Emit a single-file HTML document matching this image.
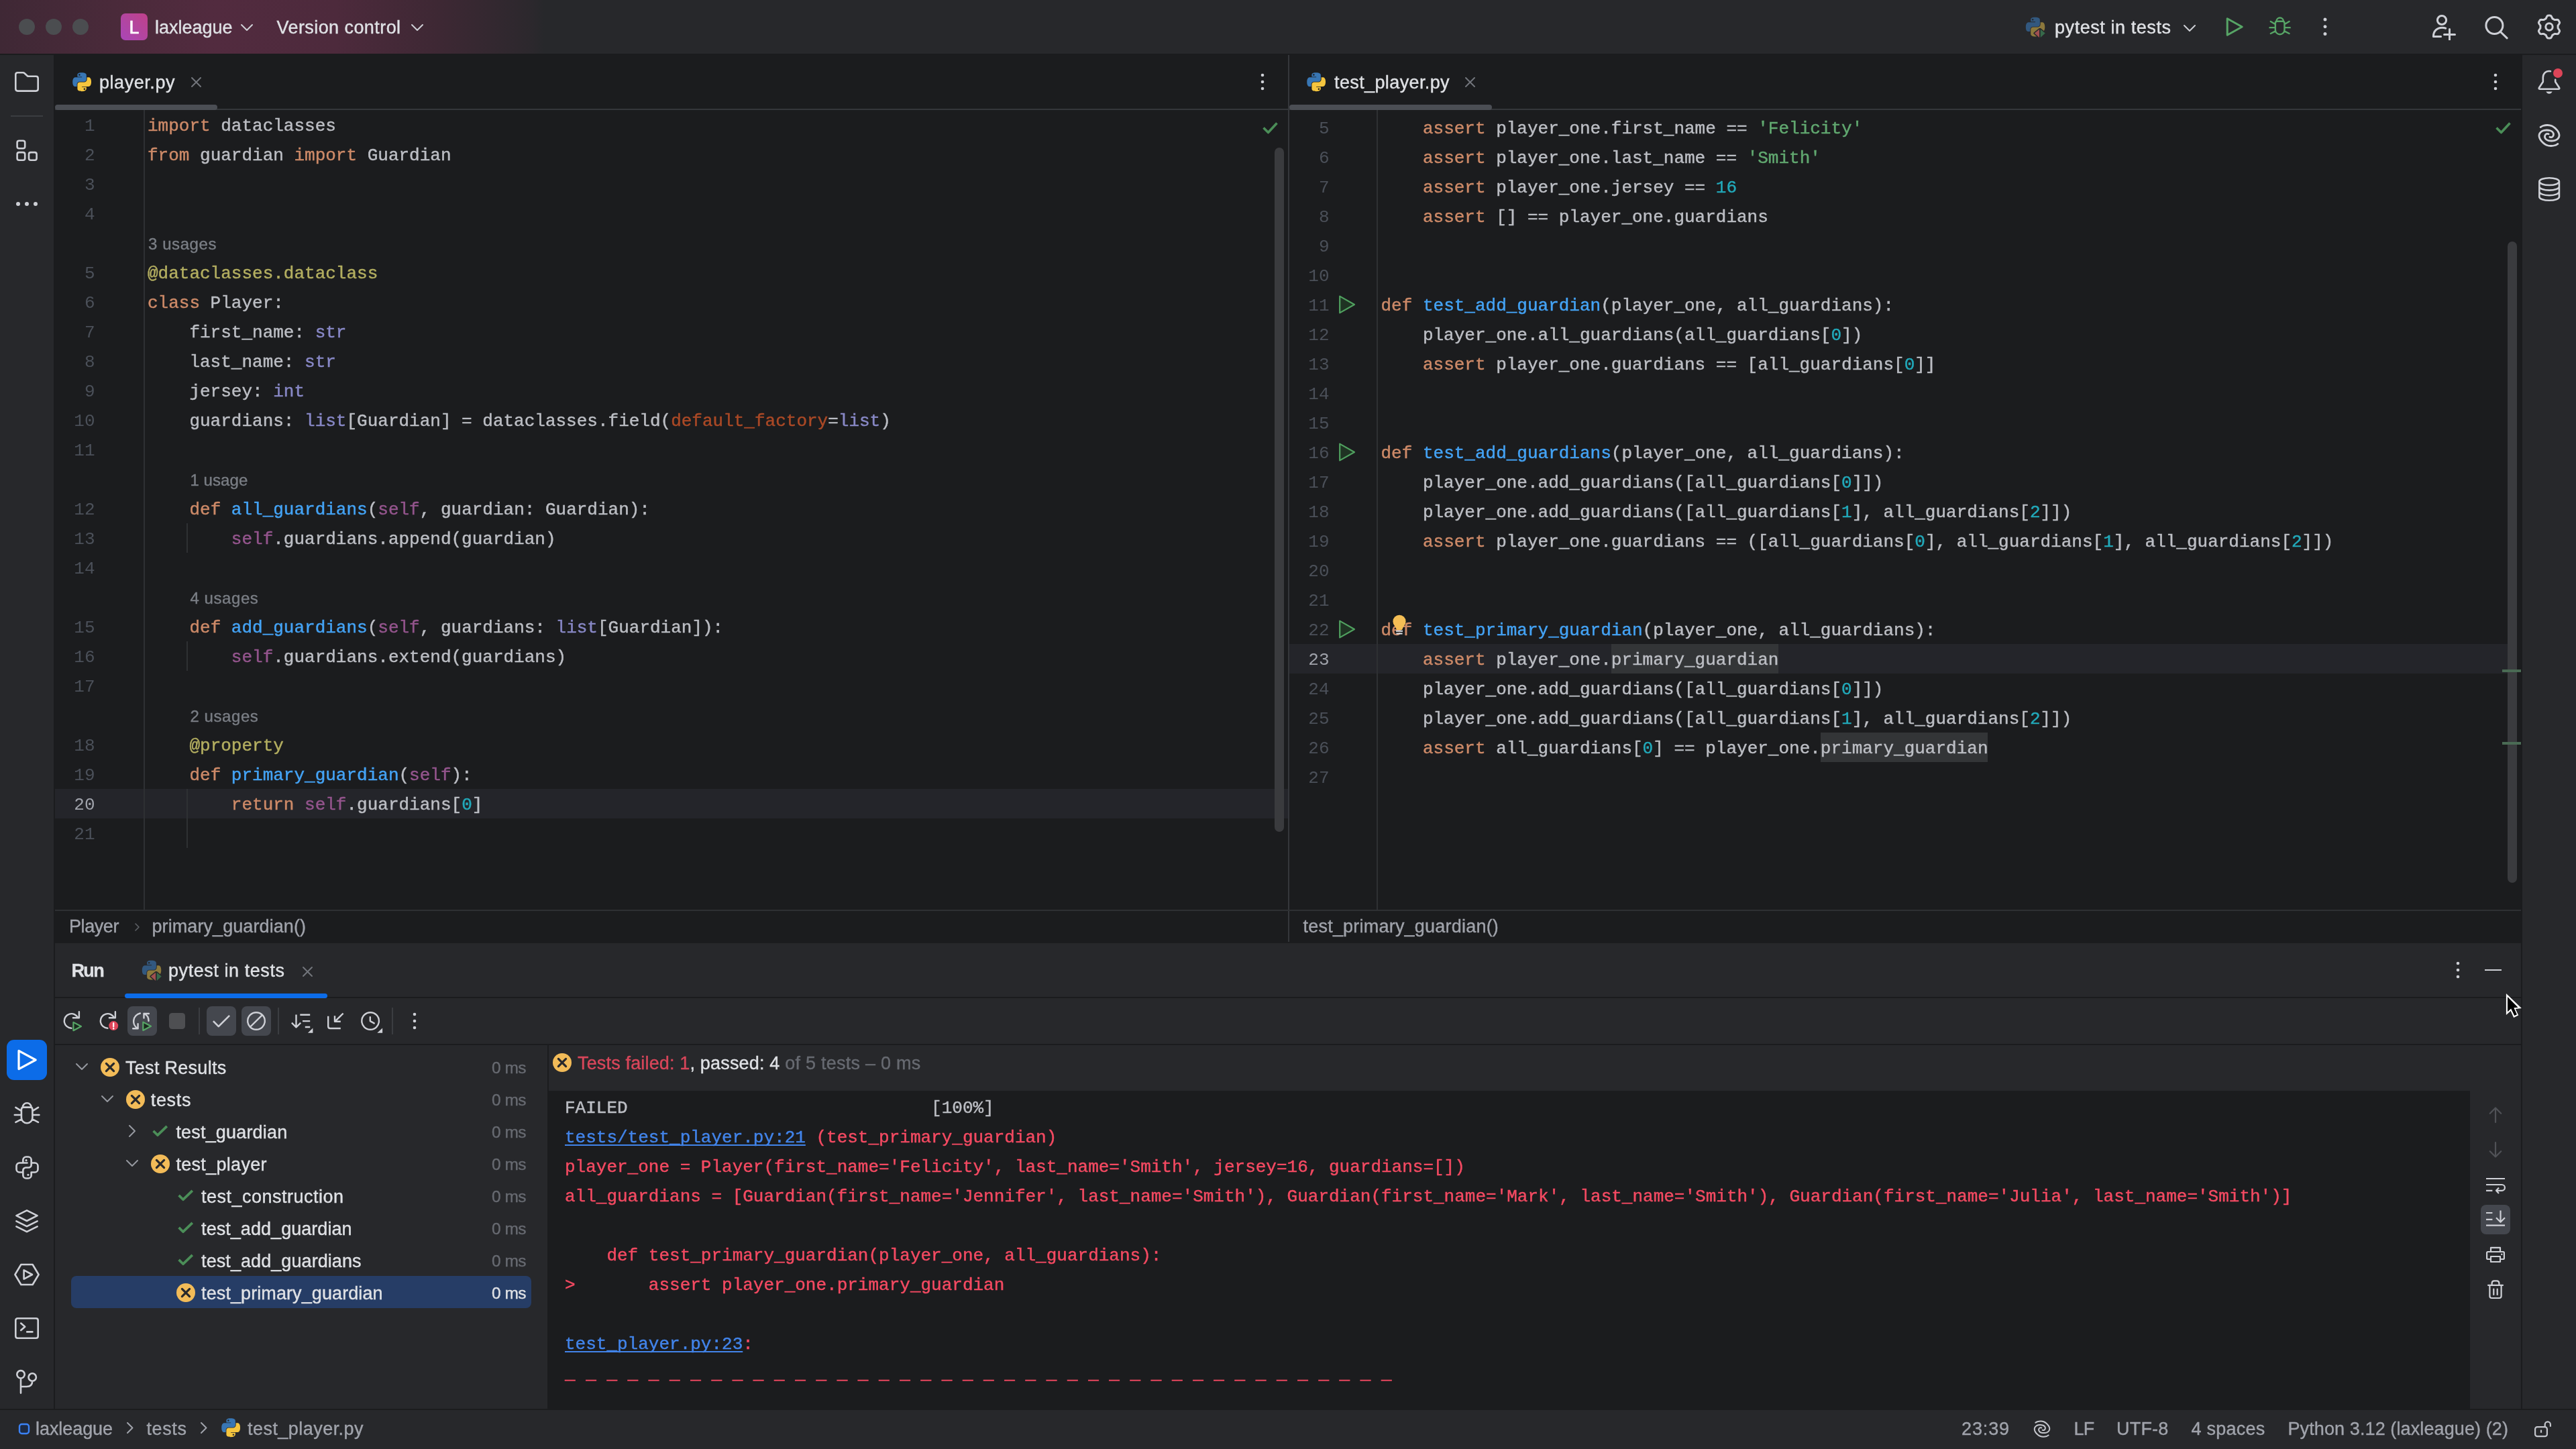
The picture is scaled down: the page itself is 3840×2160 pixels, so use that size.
<!DOCTYPE html>
<html lang="en"><head><meta charset="utf-8"><title>laxleague – test_player.py</title>
<style>
html,body{margin:0;padding:0;background:#1b1c1e;}
body{width:3840px;height:2160px;position:relative;overflow:hidden;font-family:"Liberation Sans",sans-serif;}
.b{position:absolute;display:block;}
.t{position:absolute;white-space:pre;font-family:"Liberation Sans",sans-serif;-webkit-text-stroke:0.38px currentColor;}
.c{position:absolute;white-space:pre;font-family:"Liberation Mono",monospace;font-size:26px;line-height:44px;height:44px;color:#bcbec4;letter-spacing:0;-webkit-text-stroke:0.45px currentColor;}
.ln{position:absolute;white-space:pre;font-family:"Liberation Mono",monospace;font-size:26px;line-height:44px;height:44px;color:#4b5059;text-align:right;}
.k{color:#cd8a68}.s{color:#61a870}.n{color:#22a9ba}.f{color:#44a3f5}.d{color:#b3ae60}.sf{color:#94558d}.bi{color:#8888c6}.kw{color:#aa4926}

.er{color:#f44a62}.lk{color:#4284ea;text-decoration:underline;text-underline-offset:3px;text-decoration-thickness:1.6px;text-decoration-skip-ink:none}
#root{position:absolute;left:0;top:0;width:3840px;height:2160px;will-change:transform;}
</style></head><body><div id="root">
<div class="b" style="left:0px;top:0px;width:3840px;height:80px;background:#27282b;"></div>
<div class="b" style="left:0px;top:0px;width:812px;height:80px;background:linear-gradient(90deg,#3f2835 0px,#4a2a3a 170px,#522b3f 320px,#4d2a3c 500px,#3e2834 650px,#2c282d 790px,#27282b 812px);"></div>
<div class="b" style="left:28px;top:28px;width:24px;height:24px;background:#4b4d50;border-radius:50%;"></div>
<div class="b" style="left:68px;top:28px;width:24px;height:24px;background:#4b4d50;border-radius:50%;"></div>
<div class="b" style="left:108px;top:28px;width:24px;height:24px;background:#4b4d50;border-radius:50%;"></div>
<div class="b" style="left:180px;top:20px;width:40px;height:40px;background:linear-gradient(45deg,#a946b8 0%,#b3459f 50%,#c0408a 100%);border-radius:7px;"></div>
<span class="t" style="top:21.0px;font-size:27px;line-height:40px;color:#ffffff;letter-spacing:0.000px;left:192.6px;-webkit-text-stroke:0.55px #fff;">L</span>
<span class="t" style="top:21.0px;font-size:27px;line-height:40px;color:#dfe1e5;letter-spacing:0.001px;left:231.0px;">laxleague</span>
<svg class="b" style="left:358.0px;top:34.5px;" width="20" height="12.0" viewBox="-2 -2 20 12.0" fill="none"><path d="M0 0L8.0 8.0L16 0" stroke="#ced0d6" stroke-width="2" stroke-linecap="round" stroke-linejoin="round"/></svg>
<span class="t" style="top:21.0px;font-size:27px;line-height:40px;color:#dfe1e5;letter-spacing:0.427px;left:412.5px;">Version control</span>
<svg class="b" style="left:611.5px;top:34.5px;" width="20" height="12.0" viewBox="-2 -2 20 12.0" fill="none"><path d="M0 0L8.0 8.0L16 0" stroke="#ced0d6" stroke-width="2" stroke-linecap="round" stroke-linejoin="round"/></svg>
<svg class="b" style="left:3019px;top:25px;" width="32" height="33" viewBox="0 0 32 33" fill="none"><g transform="translate(0.8 0.8) scale(0.256)"><path fill-rule="evenodd" fill="#32587f" d="M55 0C30 0 28.7 7 28.7 15V25.25H55.5V28.66H18.6C8 28.66 0 36 0 56C0 76 7 83.1 16 83.1H25.4V70.8C25.4 62 33 54.2 42.1 54.2H68.9C76.3 54.2 82.3 48 82.3 40.6V15C82.3 5 72 0 55 0ZM40.4 8.2a5.1 5.1 0 1 1 0 10.2a5.1 5.1 0 1 1 0-10.2Z"/><path fill-rule="evenodd" fill="#8c783c" d="M85.6 28.66V40.6C85.6 49.8 77.8 57.6 68.9 57.6H42.1C34.8 57.6 28.7 63.8 28.7 71.2V96.7C28.7 107 40 112.4 55.5 112.4C72 112.4 82.3 106 82.3 96.7V86.5H55.5V83.1H95.7C105 83.1 111.2 74 111.2 56C111.2 38 105 28.66 95.7 28.66ZM70.6 93.3a5.1 5.1 0 1 1 0 10.2a5.1 5.1 0 1 1 0-10.2Z"/></g><path d="M13.6 24.6L21 18.4H22.7L29.9 24.6L22.7 31.3H21Z" fill="#27282b" stroke="#27282b" stroke-width="2.6" stroke-linejoin="round"/><path d="M13.8 24.6L21 18.8V30.9Z" fill="#a05050"/><path d="M29.7 24.6L22.7 18.8V30.9Z" fill="#37694a"/></svg>
<span class="t" style="top:21.0px;font-size:27px;line-height:40px;color:#dfe1e5;letter-spacing:0.562px;left:3063.0px;">pytest in tests</span>
<svg class="b" style="left:3254.0px;top:36.0px;" width="20" height="12.0" viewBox="-2 -2 20 12.0" fill="none"><path d="M0 0L8.0 8.0L16 0" stroke="#ced0d6" stroke-width="2" stroke-linecap="round" stroke-linejoin="round"/></svg>
<svg class="b" style="left:3311.0px;top:20.0px;" width="40" height="40" viewBox="0 0 20 20" fill="none"><path d="M4.6 3.9V16.1L15.6 10Z" stroke="#57a566" stroke-width="1.5" stroke-linecap="round" stroke-linejoin="round" /></svg>
<svg class="b" style="left:3381.5px;top:23.200000000000003px;" width="33" height="33" viewBox="0 0 20 20" fill="none"><path d="M6.9 5.3A3.2 3.2 0 0 1 13.3 5.3M5.95 7Q5.95 5.3 7.5 5.3H12.7Q14.2 5.3 14.2 7V13A4.12 4.12 0 0 1 5.95 13ZM5.8 7.9L1.7 5.4M5.8 11H0.9M5.8 14.3L1.7 16.4M14.4 7.9L18.5 5.4M14.4 11H19.2M14.4 14.3L18.5 16.4" stroke="#57a566" stroke-width="1.45" stroke-linecap="round" stroke-linejoin="round" /></svg>
<svg class="b" style="left:3462px;top:25.2px;" width="8" height="29.6" viewBox="-4 -14.8 8 29.6" fill="none"><circle cx="0" cy="-10.8" r="2.5" fill="#ced0d6"/><circle cx="0" cy="0" r="2.5" fill="#ced0d6"/><circle cx="0" cy="10.8" r="2.5" fill="#ced0d6"/></svg>
<svg class="b" style="left:3622.0px;top:20.0px;" width="40" height="40" viewBox="0 0 20 20" fill="none"><path d="M9 1.7a3.3 3.3 0 1 1 0 6.6a3.3 3.3 0 1 1 0-6.6ZM8.3 17.2H2.7C2.7 13 5.6 10.6 9.2 10.6C10.4 10.6 11.2 10.8 11.8 11.1M14.75 11.75V19.75M10.75 15.75H18.75" stroke="#ced0d6" stroke-width="1.5" stroke-linecap="round" stroke-linejoin="round" /></svg>
<svg class="b" style="left:3700.5px;top:20.0px;" width="40" height="40" viewBox="0 0 20 20" fill="none"><path d="M8.7 2.75a6.25 6.25 0 1 1 0 12.5a6.25 6.25 0 1 1 0-12.5ZM13.25 13.75L18.1 18.4" stroke="#ced0d6" stroke-width="1.5" stroke-linecap="round" stroke-linejoin="round" /></svg>
<svg class="b" style="left:3780.0px;top:20.0px;" width="40" height="40" viewBox="0 0 20 20" fill="none"><path d="M16.55 10.00L16.54 10.29L16.53 10.57L16.49 10.85L16.68 11.18L16.96 11.54L17.24 11.94L17.50 12.37L17.72 12.81L17.81 13.23L17.66 13.57L17.50 13.90L17.32 14.22L17.13 14.54L16.92 14.85L16.70 15.14L16.29 15.28L15.80 15.32L15.30 15.30L14.82 15.26L14.36 15.20L13.99 15.20L13.76 15.37L13.52 15.52L13.28 15.67L13.02 15.81L12.77 15.94L12.51 16.05L12.32 16.38L12.14 16.80L11.94 17.24L11.70 17.68L11.43 18.09L11.10 18.38L10.74 18.42L10.37 18.44L10.00 18.45L9.63 18.44L9.26 18.42L8.90 18.38L8.57 18.09L8.30 17.68L8.06 17.24L7.86 16.80L7.68 16.38L7.49 16.05L7.23 15.94L6.98 15.81L6.73 15.67L6.48 15.52L6.24 15.37L6.01 15.20L5.64 15.20L5.18 15.26L4.70 15.30L4.20 15.32L3.71 15.28L3.30 15.14L3.08 14.85L2.87 14.54L2.68 14.23L2.50 13.90L2.34 13.57L2.19 13.23L2.28 12.81L2.50 12.37L2.76 11.94L3.04 11.54L3.32 11.18L3.51 10.85L3.47 10.57L3.46 10.29L3.45 10.00L3.46 9.71L3.47 9.43L3.51 9.15L3.32 8.82L3.04 8.46L2.76 8.06L2.50 7.63L2.28 7.19L2.19 6.77L2.34 6.43L2.50 6.10L2.68 5.77L2.87 5.46L3.08 5.15L3.30 4.86L3.71 4.72L4.20 4.68L4.70 4.70L5.18 4.74L5.64 4.80L6.01 4.80L6.24 4.63L6.48 4.48L6.72 4.33L6.98 4.19L7.23 4.06L7.49 3.95L7.68 3.62L7.86 3.20L8.06 2.76L8.30 2.32L8.57 1.91L8.90 1.62L9.26 1.58L9.63 1.56L10.00 1.55L10.37 1.56L10.74 1.58L11.10 1.62L11.43 1.91L11.70 2.32L11.94 2.76L12.14 3.20L12.32 3.62L12.51 3.95L12.77 4.06L13.02 4.19L13.27 4.33L13.52 4.48L13.76 4.63L13.99 4.80L14.36 4.80L14.82 4.74L15.30 4.70L15.80 4.68L16.29 4.72L16.70 4.86L16.92 5.15L17.13 5.46L17.32 5.78L17.50 6.10L17.66 6.43L17.81 6.77L17.72 7.19L17.50 7.63L17.24 8.06L16.96 8.46L16.68 8.82L16.49 9.15L16.53 9.43L16.54 9.71Z" stroke="#ced0d6" stroke-width="1.5" stroke-linejoin="round"/><circle cx="10" cy="10" r="2.6" stroke="#ced0d6" stroke-width="1.5"/></svg>
<div class="b" style="left:0px;top:82px;width:80px;height:2018px;background:#27282b;"></div>
<div class="b" style="left:3760px;top:82px;width:80px;height:2018px;background:#27282b;"></div>
<div class="b" style="left:0px;top:2102px;width:3840px;height:58px;background:#27282b;"></div>
<svg class="b" style="left:20.0px;top:102.0px;" width="40" height="40" viewBox="0 0 20 20" fill="none"><path d="M3.15 3.1H7.1Q7.7 3.1 8.15 3.5L10.3 5.5Q10.7 5.9 11.3 5.9H16.85Q18.35 5.9 18.35 7.4V15.3Q18.35 16.8 16.85 16.8H3.15Q1.65 16.8 1.65 15.3V4.6Q1.65 3.1 3.15 3.1Z" stroke="#ced0d6" stroke-width="1.3" stroke-linecap="round" stroke-linejoin="round" /></svg>
<div class="b" style="left:16px;top:172px;width:48px;height:2px;background:#3b3d41;"></div>
<svg class="b" style="left:20.0px;top:204.0px;" width="40" height="40" viewBox="0 0 20 20" fill="none"><rect x="2.8" y="2.85" width="5.8" height="5.8" rx="1.4" stroke="#ced0d6" stroke-width="1.3"/><rect x="2.8" y="11.55" width="5.8" height="5.8" rx="1.4" stroke="#ced0d6" stroke-width="1.3"/><rect x="11.5" y="11.55" width="5.8" height="5.8" rx="1.4" stroke="#ced0d6" stroke-width="1.3"/></svg>
<div class="b" style="left:23.799999999999997px;top:301.09999999999997px;width:6.2px;height:6.2px;background:#ced0d6;border-radius:50%;"></div>
<div class="b" style="left:36.9px;top:301.09999999999997px;width:6.2px;height:6.2px;background:#ced0d6;border-radius:50%;"></div>
<div class="b" style="left:50.0px;top:301.09999999999997px;width:6.2px;height:6.2px;background:#ced0d6;border-radius:50%;"></div>
<div class="b" style="left:10px;top:1550px;width:60px;height:60px;background:#0c6ce8;border-radius:11px;"></div>
<svg class="b" style="left:20.0px;top:1560.0px;" width="40" height="40" viewBox="0 0 20 20" fill="none"><path d="M4 3.2V16.8L16.6 10Z" stroke="#ffffff" stroke-width="1.6" stroke-linecap="round" stroke-linejoin="round" /></svg>
<svg class="b" style="left:20.0px;top:1639.7px;" width="40" height="40" viewBox="0 0 20 20" fill="none"><path d="M6.9 5.3A3.2 3.2 0 0 1 13.3 5.3M5.95 7Q5.95 5.3 7.5 5.3H12.7Q14.2 5.3 14.2 7V13A4.12 4.12 0 0 1 5.95 13ZM5.8 7.9L1.7 5.4M5.8 11H0.9M5.8 14.3L1.7 16.4M14.4 7.9L18.5 5.4M14.4 11H19.2M14.4 14.3L18.5 16.4" stroke="#ced0d6" stroke-width="1.3" stroke-linecap="round" stroke-linejoin="round" /></svg>
<svg class="b" style="left:19.5px;top:1719.5px;" width="41" height="41" viewBox="0 0 20 20" fill="none"><path d="M7 6.6V4.4C7 3.2 8 2.2 9.2 2.2H10.8C12 2.2 13 3.2 13 4.4V8C13 9.1 12.1 10 11 10H9C7.9 10 7 10.9 7 12V15.6C7 16.8 8 17.8 9.2 17.8H10.8C12 17.8 13 16.8 13 15.6V13.4M7 6.6H4.4C3.2 6.6 2.2 7.6 2.2 8.8V11.2C2.2 12.4 3.2 13.4 4.4 13.4H7M13 13.4H15.6C16.8 13.4 17.8 12.4 17.8 11.2V8.8C17.8 7.6 16.8 6.6 15.6 6.6H13M7 6.6H10" stroke="#ced0d6" stroke-width="1.3" stroke-linecap="round" stroke-linejoin="round" /><circle cx="9.3" cy="4.7" r="0.75" fill="#ced0d6"/><circle cx="10.7" cy="15.3" r="0.75" fill="#ced0d6"/></svg>
<svg class="b" style="left:20.0px;top:1800.0px;" width="40" height="40" viewBox="0 0 20 20" fill="none"><path d="M10 2.2L17.8 6.1L10 10L2.2 6.1ZM2.2 10.2L10 14.1L17.8 10.2M2.2 14.2L10 18.1L17.8 14.2" stroke="#ced0d6" stroke-width="1.3" stroke-linecap="round" stroke-linejoin="round" /></svg>
<svg class="b" style="left:20.0px;top:1880.0px;" width="40" height="40" viewBox="0 0 20 20" fill="none"><path d="M5.7 2.5H14.3L18.8 10L14.3 17.5H5.7L1.2 10ZM7.8 6.7V13.3L14 10Z" stroke="#ced0d6" stroke-width="1.3" stroke-linecap="round" stroke-linejoin="round" /></svg>
<svg class="b" style="left:20.0px;top:1960.0px;" width="40" height="40" viewBox="0 0 20 20" fill="none"><path d="M3.15 2.65H16.85Q18.35 2.65 18.35 4.15V15.9Q18.35 17.4 16.85 17.4H3.15Q1.65 17.4 1.65 15.9V4.15Q1.65 2.65 3.15 2.65ZM5.6 6.3L8.6 8.9L5.6 11.5M10.1 12.7H14.2" stroke="#ced0d6" stroke-width="1.3" stroke-linecap="round" stroke-linejoin="round" /></svg>
<svg class="b" style="left:20.0px;top:2040.0px;" width="40" height="40" viewBox="0 0 20 20" fill="none"><path d="M5.5 1.55a2.85 2.85 0 1 1 0 5.7a2.85 2.85 0 1 1 0-5.7ZM14.1 3.65a2.85 2.85 0 1 1 0 5.7a2.85 2.85 0 1 1 0-5.7ZM5.5 7.3V18.3M14.1 9.4C14.1 12.4 12.4 13.5 9.8 13.5H5.5" stroke="#ced0d6" stroke-width="1.3" stroke-linecap="round" stroke-linejoin="round" /></svg>
<svg class="b" style="left:3780.0px;top:102.0px;" width="40" height="40" viewBox="0 0 20 20" fill="none"><path d="M11 2.1C10.7 2 10.3 2 10 2C7.3 2 5.4 4 5.4 6.8V10L2.5 14.4Q2.1 15.4 3.1 15.4H16.9Q17.9 15.4 17.5 14.4L14.6 10V8.4" stroke="#ced0d6" stroke-width="1.3" stroke-linecap="round" stroke-linejoin="round" /><path d="M7.7 17.3H12.3Q11.5 18.9 10 18.9Q8.5 18.9 7.7 17.3Z" fill="#ced0d6"/></svg>
<div class="b" style="left:3806px;top:101.7px;width:14px;height:14px;background:#dd4558;border-radius:50%;"></div>
<svg class="b" style="left:3780px;top:182px;" width="40" height="40" viewBox="0 0 40 40" fill="none"><path d="M32.84 32.52C32.23 32.85 30.91 34.00 29.20 34.50C27.49 35.00 24.79 35.55 22.58 35.50C20.37 35.45 17.89 34.95 15.96 34.18C14.03 33.41 12.53 32.22 11.00 30.86C9.47 29.50 7.79 27.61 6.80 26.00C5.81 24.39 5.21 22.70 5.04 21.20C4.87 19.70 5.17 18.23 5.80 17.00C6.43 15.77 7.66 14.58 8.80 13.80C9.94 13.02 11.34 12.62 12.64 12.32C13.94 12.02 15.24 11.97 16.62 12.00C18.00 12.03 19.65 12.15 20.92 12.48C22.19 12.81 23.36 13.31 24.24 14.00C25.12 14.69 25.86 15.74 26.22 16.62C26.58 17.50 26.57 18.45 26.40 19.28C26.23 20.11 25.73 21.05 25.20 21.60C24.67 22.15 23.91 22.49 23.20 22.60C22.49 22.71 21.30 22.32 20.92 22.26M7.16 7.48C7.77 7.15 9.09 6.00 10.80 5.50C12.51 5.00 15.21 4.45 17.42 4.50C19.63 4.55 22.11 5.05 24.04 5.82C25.97 6.59 27.47 7.78 29.00 9.14C30.53 10.50 32.21 12.39 33.20 14.00C34.19 15.61 34.79 17.30 34.96 18.80C35.13 20.30 34.83 21.77 34.20 23.00C33.57 24.23 32.34 25.42 31.20 26.20C30.06 26.98 28.66 27.38 27.36 27.68C26.06 27.98 24.76 28.03 23.38 28.00C22.00 27.97 20.35 27.85 19.08 27.52C17.81 27.19 16.64 26.69 15.76 26.00C14.88 25.31 14.14 24.26 13.78 23.38C13.42 22.50 13.43 21.55 13.60 20.72C13.77 19.89 14.27 18.95 14.80 18.40C15.33 17.85 16.09 17.51 16.80 17.40C17.51 17.29 18.70 17.68 19.08 17.74" stroke="#ced0d6" stroke-width="2.8" stroke-linecap="round" stroke-linejoin="round" /></svg>
<svg class="b" style="left:3780.0px;top:262.0px;" width="40" height="40" viewBox="0 0 20 20" fill="none"><path d="M2.67 4.3A7.4 2.7 0 0 1 17.47 4.3A7.4 2.7 0 0 1 2.67 4.3V15.7A7.4 2.7 0 0 0 17.47 15.7V4.3M2.67 8.1A7.4 2.7 0 0 0 17.47 8.1M2.67 11.9A7.4 2.7 0 0 0 17.47 11.9" stroke="#ced0d6" stroke-width="1.3" stroke-linecap="round" stroke-linejoin="round" /></svg>
<div class="b" style="left:82px;top:162px;width:1838px;height:2px;background:#35373b;"></div>
<div class="b" style="left:1922px;top:162px;width:1836px;height:2px;background:#35373b;"></div>
<div class="b" style="left:1920px;top:82px;width:2px;height:1322px;background:#35373b;"></div>
<svg class="b" style="left:107.5px;top:108px;" width="28.5" height="28.5" viewBox="-1 0 114 113" fill="none"><path fill-rule="evenodd" fill="#3876b4" d="M55 0C30 0 28.7 7 28.7 15V25.25H55.5V28.66H18.6C8 28.66 0 36 0 56C0 76 7 83.1 16 83.1H25.4V70.8C25.4 62 33 54.2 42.1 54.2H68.9C76.3 54.2 82.3 48 82.3 40.6V15C82.3 5 72 0 55 0ZM40.4 8.2a5.1 5.1 0 1 1 0 10.2a5.1 5.1 0 1 1 0-10.2Z"/><path fill-rule="evenodd" fill="#f5c53e" d="M85.6 28.66V40.6C85.6 49.8 77.8 57.6 68.9 57.6H42.1C34.8 57.6 28.7 63.8 28.7 71.2V96.7C28.7 107 40 112.4 55.5 112.4C72 112.4 82.3 106 82.3 96.7V86.5H55.5V83.1H95.7C105 83.1 111.2 74 111.2 56C111.2 38 105 28.66 95.7 28.66ZM70.6 93.3a5.1 5.1 0 1 1 0 10.2a5.1 5.1 0 1 1 0-10.2Z"/></svg>
<span class="t" style="top:103.0px;font-size:27px;line-height:40px;color:#dfe1e5;letter-spacing:0.549px;left:148.0px;">player.py</span>
<svg class="b" style="left:283.5px;top:113.5px;" width="17" height="17" viewBox="-2 -2 17 17" fill="none"><path d="M0 0L13 13M13 0L0 13" stroke="#72757b" stroke-width="2" stroke-linecap="round"/></svg>
<div class="b" style="left:82px;top:156px;width:242px;height:8px;background:#4b4e54;border-radius:4px;"></div>
<svg class="b" style="left:1878px;top:108px;" width="8" height="28" viewBox="-4 -14 8 28" fill="none"><circle cx="0" cy="-10" r="2.3" fill="#ced0d6"/><circle cx="0" cy="0" r="2.3" fill="#ced0d6"/><circle cx="0" cy="10" r="2.3" fill="#ced0d6"/></svg>
<svg class="b" style="left:1947.5px;top:108px;" width="28.5" height="28.5" viewBox="-1 0 114 113" fill="none"><path fill-rule="evenodd" fill="#3876b4" d="M55 0C30 0 28.7 7 28.7 15V25.25H55.5V28.66H18.6C8 28.66 0 36 0 56C0 76 7 83.1 16 83.1H25.4V70.8C25.4 62 33 54.2 42.1 54.2H68.9C76.3 54.2 82.3 48 82.3 40.6V15C82.3 5 72 0 55 0ZM40.4 8.2a5.1 5.1 0 1 1 0 10.2a5.1 5.1 0 1 1 0-10.2Z"/><path fill-rule="evenodd" fill="#f5c53e" d="M85.6 28.66V40.6C85.6 49.8 77.8 57.6 68.9 57.6H42.1C34.8 57.6 28.7 63.8 28.7 71.2V96.7C28.7 107 40 112.4 55.5 112.4C72 112.4 82.3 106 82.3 96.7V86.5H55.5V83.1H95.7C105 83.1 111.2 74 111.2 56C111.2 38 105 28.66 95.7 28.66ZM70.6 93.3a5.1 5.1 0 1 1 0 10.2a5.1 5.1 0 1 1 0-10.2Z"/></svg>
<span class="t" style="top:103.0px;font-size:27px;line-height:40px;color:#dfe1e5;letter-spacing:0.386px;left:1989.0px;">test_player.py</span>
<svg class="b" style="left:2183.0px;top:113.5px;" width="17" height="17" viewBox="-2 -2 17 17" fill="none"><path d="M0 0L13 13M13 0L0 13" stroke="#72757b" stroke-width="2" stroke-linecap="round"/></svg>
<div class="b" style="left:1922px;top:156px;width:302px;height:8px;background:#4b4e54;border-radius:4px;"></div>
<svg class="b" style="left:3716px;top:108px;" width="8" height="28" viewBox="-4 -14 8 28" fill="none"><circle cx="0" cy="-10" r="2.3" fill="#ced0d6"/><circle cx="0" cy="0" r="2.3" fill="#ced0d6"/><circle cx="0" cy="10" r="2.3" fill="#ced0d6"/></svg>
<div class="b" style="left:214px;top:164px;width:2px;height:1192px;background:#2e3033;"></div>
<div class="b" style="left:2052px;top:164px;width:2px;height:1192px;background:#2e3033;"></div>
<div class="b" style="left:82px;top:1356px;width:3676px;height:2px;background:#2e3033;"></div>
<span class="t" style="top:1360.5px;font-size:27px;line-height:40px;color:#a0a3ab;letter-spacing:-0.422px;left:103.0px;">Player</span>
<svg class="b" style="left:199.5px;top:1374.5px;" width="9.0" height="14" viewBox="-2 -2 9.0 14" fill="none"><path d="M0 0L5.0 5.0L0 10" stroke="#5e6167" stroke-width="1.6" stroke-linecap="round" stroke-linejoin="round"/></svg>
<span class="t" style="top:1360.5px;font-size:27px;line-height:40px;color:#a0a3ab;letter-spacing:0.081px;left:226.5px;">primary_guardian()</span>
<span class="t" style="top:1360.5px;font-size:27px;line-height:40px;color:#a0a3ab;letter-spacing:0.214px;left:1942.5px;">test_primary_guardian()</span>
<div class="b" style="left:82px;top:1176px;width:1838px;height:44px;background:#24252a;"></div>
<div class="b" style="left:214px;top:1176px;width:2px;height:44px;background:#2e3033;"></div>
<div class="b" style="left:278px;top:780px;width:2px;height:44px;background:#2e3033;"></div>
<div class="b" style="left:278px;top:956px;width:2px;height:44px;background:#2e3033;"></div>
<div class="b" style="left:278px;top:1176px;width:2px;height:88px;background:#2e3033;"></div>
<div class="ln" style="left:61.5px;width:80px;top:166px;">1</div>
<div class="c" style="left:220px;top:166px;"><span class="k">import</span> dataclasses</div>
<div class="ln" style="left:61.5px;width:80px;top:210px;">2</div>
<div class="c" style="left:220px;top:210px;"><span class="k">from</span> guardian <span class="k">import</span> Guardian</div>
<div class="ln" style="left:61.5px;width:80px;top:254px;">3</div>
<div class="ln" style="left:61.5px;width:80px;top:298px;">4</div>
<span class="t" style="top:343.5px;font-size:24px;line-height:40px;color:#7a7e85;letter-spacing:0.576px;left:221.0px;">3 usages</span>
<div class="ln" style="left:61.5px;width:80px;top:386px;">5</div>
<div class="c" style="left:220px;top:386px;"><span class="d">@dataclasses.dataclass</span></div>
<div class="ln" style="left:61.5px;width:80px;top:430px;">6</div>
<div class="c" style="left:220px;top:430px;"><span class="k">class</span> Player:</div>
<div class="ln" style="left:61.5px;width:80px;top:474px;">7</div>
<div class="c" style="left:220px;top:474px;">    first_name: <span class="bi">str</span></div>
<div class="ln" style="left:61.5px;width:80px;top:518px;">8</div>
<div class="c" style="left:220px;top:518px;">    last_name: <span class="bi">str</span></div>
<div class="ln" style="left:61.5px;width:80px;top:562px;">9</div>
<div class="c" style="left:220px;top:562px;">    jersey: <span class="bi">int</span></div>
<div class="ln" style="left:61.5px;width:80px;top:606px;">10</div>
<div class="c" style="left:220px;top:606px;">    guardians: <span class="bi">list</span>[Guardian] = dataclasses.field(<span class="kw">default_factory</span>=<span class="bi">list</span>)</div>
<div class="ln" style="left:61.5px;width:80px;top:650px;">11</div>
<span class="t" style="top:695.5px;font-size:24px;line-height:40px;color:#7a7e85;letter-spacing:0.087px;left:283.4px;">1 usage</span>
<div class="ln" style="left:61.5px;width:80px;top:738px;">12</div>
<div class="c" style="left:220px;top:738px;">    <span class="k">def</span> <span class="f">all_guardians</span>(<span class="sf">self</span>, guardian: Guardian):</div>
<div class="ln" style="left:61.5px;width:80px;top:782px;">13</div>
<div class="c" style="left:220px;top:782px;">        <span class="sf">self</span>.guardians.append(guardian)</div>
<div class="ln" style="left:61.5px;width:80px;top:826px;">14</div>
<span class="t" style="top:871.5px;font-size:24px;line-height:40px;color:#7a7e85;letter-spacing:0.576px;left:283.4px;">4 usages</span>
<div class="ln" style="left:61.5px;width:80px;top:914px;">15</div>
<div class="c" style="left:220px;top:914px;">    <span class="k">def</span> <span class="f">add_guardians</span>(<span class="sf">self</span>, guardians: <span class="bi">list</span>[Guardian]):</div>
<div class="ln" style="left:61.5px;width:80px;top:958px;">16</div>
<div class="c" style="left:220px;top:958px;">        <span class="sf">self</span>.guardians.extend(guardians)</div>
<div class="ln" style="left:61.5px;width:80px;top:1002px;">17</div>
<span class="t" style="top:1047.5px;font-size:24px;line-height:40px;color:#7a7e85;letter-spacing:0.576px;left:283.4px;">2 usages</span>
<div class="ln" style="left:61.5px;width:80px;top:1090px;">18</div>
<div class="c" style="left:220px;top:1090px;">    <span class="d">@property</span></div>
<div class="ln" style="left:61.5px;width:80px;top:1134px;">19</div>
<div class="c" style="left:220px;top:1134px;">    <span class="k">def</span> <span class="f">primary_guardian</span>(<span class="sf">self</span>):</div>
<div class="ln" style="left:61.5px;width:80px;top:1178px;color:#a0a3ab;">20</div>
<div class="c" style="left:220px;top:1178px;">        <span class="k">return</span> <span class="sf">self</span>.guardians[<span class="n">0</span>]</div>
<div class="ln" style="left:61.5px;width:80px;top:1222px;">21</div>
<div class="b" style="left:1900px;top:220px;width:14px;height:1020px;background:#3a3b3e;border-radius:7px;"></div>
<svg class="b" style="left:1880px;top:178px;" width="28" height="24" viewBox="0 0 28 24" fill="none"><path d="M3.5 12.5L10.5 19.5L23.5 5.5" stroke="#4b8e58" stroke-width="3.6" stroke-linecap="butt" stroke-linejoin="round" /></svg>
<div class="b" style="left:1922px;top:960px;width:1816px;height:44px;background:#24252a;"></div>
<div class="b" style="left:2052px;top:960px;width:2px;height:44px;background:#2e3033;"></div>
<div class="b" style="left:2401.7px;top:960px;width:249.6px;height:44px;background:#333537;"></div>
<div class="b" style="left:2713.7px;top:1092px;width:249.6px;height:44px;background:#333537;"></div>
<div class="ln" style="left:1901.5px;width:80px;top:170px;">5</div>
<div class="c" style="left:2058.5px;top:170px;">    <span class="k">assert</span> player_one.first_name == <span class="s">'Felicity'</span></div>
<div class="ln" style="left:1901.5px;width:80px;top:214px;">6</div>
<div class="c" style="left:2058.5px;top:214px;">    <span class="k">assert</span> player_one.last_name == <span class="s">'Smith'</span></div>
<div class="ln" style="left:1901.5px;width:80px;top:258px;">7</div>
<div class="c" style="left:2058.5px;top:258px;">    <span class="k">assert</span> player_one.jersey == <span class="n">16</span></div>
<div class="ln" style="left:1901.5px;width:80px;top:302px;">8</div>
<div class="c" style="left:2058.5px;top:302px;">    <span class="k">assert</span> [] == player_one.guardians</div>
<div class="ln" style="left:1901.5px;width:80px;top:346px;">9</div>
<div class="ln" style="left:1901.5px;width:80px;top:390px;">10</div>
<div class="ln" style="left:1901.5px;width:80px;top:434px;">11</div>
<div class="c" style="left:2058.5px;top:434px;"><span class="k">def</span> <span class="f">test_add_guardian</span>(player_one, all_guardians):</div>
<div class="ln" style="left:1901.5px;width:80px;top:478px;">12</div>
<div class="c" style="left:2058.5px;top:478px;">    player_one.all_guardians(all_guardians[<span class="n">0</span>])</div>
<div class="ln" style="left:1901.5px;width:80px;top:522px;">13</div>
<div class="c" style="left:2058.5px;top:522px;">    <span class="k">assert</span> player_one.guardians == [all_guardians[<span class="n">0</span>]]</div>
<div class="ln" style="left:1901.5px;width:80px;top:566px;">14</div>
<div class="ln" style="left:1901.5px;width:80px;top:610px;">15</div>
<div class="ln" style="left:1901.5px;width:80px;top:654px;">16</div>
<div class="c" style="left:2058.5px;top:654px;"><span class="k">def</span> <span class="f">test_add_guardians</span>(player_one, all_guardians):</div>
<div class="ln" style="left:1901.5px;width:80px;top:698px;">17</div>
<div class="c" style="left:2058.5px;top:698px;">    player_one.add_guardians([all_guardians[<span class="n">0</span>]])</div>
<div class="ln" style="left:1901.5px;width:80px;top:742px;">18</div>
<div class="c" style="left:2058.5px;top:742px;">    player_one.add_guardians([all_guardians[<span class="n">1</span>], all_guardians[<span class="n">2</span>]])</div>
<div class="ln" style="left:1901.5px;width:80px;top:786px;">19</div>
<div class="c" style="left:2058.5px;top:786px;">    <span class="k">assert</span> player_one.guardians == ([all_guardians[<span class="n">0</span>], all_guardians[<span class="n">1</span>], all_guardians[<span class="n">2</span>]])</div>
<div class="ln" style="left:1901.5px;width:80px;top:830px;">20</div>
<div class="ln" style="left:1901.5px;width:80px;top:874px;">21</div>
<div class="ln" style="left:1901.5px;width:80px;top:918px;">22</div>
<div class="c" style="left:2058.5px;top:918px;"><span class="k">def</span> <span class="f">test_primary_guardian</span>(player_one, all_guardians):</div>
<div class="ln" style="left:1901.5px;width:80px;top:962px;color:#a0a3ab;">23</div>
<div class="c" style="left:2058.5px;top:962px;">    <span class="k">assert</span> player_one.primary_guardian</div>
<div class="ln" style="left:1901.5px;width:80px;top:1006px;">24</div>
<div class="c" style="left:2058.5px;top:1006px;">    player_one.add_guardians([all_guardians[<span class="n">0</span>]])</div>
<div class="ln" style="left:1901.5px;width:80px;top:1050px;">25</div>
<div class="c" style="left:2058.5px;top:1050px;">    player_one.add_guardians([all_guardians[<span class="n">1</span>], all_guardians[<span class="n">2</span>]])</div>
<div class="ln" style="left:1901.5px;width:80px;top:1094px;">26</div>
<div class="c" style="left:2058.5px;top:1094px;">    <span class="k">assert</span> all_guardians[<span class="n">0</span>] == player_one.primary_guardian</div>
<div class="ln" style="left:1901.5px;width:80px;top:1138px;">27</div>
<svg class="b" style="left:1994px;top:440.2px;" width="28" height="28" viewBox="0 0 28 28" fill="none"><path d="M3.2 1.6V26.4L25 14Z" stroke="#50a05f" stroke-width="2.2" stroke-linecap="round" stroke-linejoin="round" fill="#1f3323"/></svg>
<svg class="b" style="left:1994px;top:660.2px;" width="28" height="28" viewBox="0 0 28 28" fill="none"><path d="M3.2 1.6V26.4L25 14Z" stroke="#50a05f" stroke-width="2.2" stroke-linecap="round" stroke-linejoin="round" fill="#1f3323"/></svg>
<svg class="b" style="left:1994px;top:924.2px;" width="28" height="28" viewBox="0 0 28 28" fill="none"><path d="M3.2 1.6V26.4L25 14Z" stroke="#50a05f" stroke-width="2.2" stroke-linecap="round" stroke-linejoin="round" fill="#1f3323"/></svg>
<svg class="b" style="left:2074px;top:914px;" width="24" height="34" viewBox="0 0 24 34" fill="none"><circle cx="12" cy="12.4" r="9.6" fill="#f5be55"/><path d="M5.2 18.6L8 25H16L18.8 18.6Z" fill="#f5be55"/><path d="M7 26.8H17M7.4 30.5H16.6" stroke="#dfe1e5" stroke-width="2"/></svg>
<div class="b" style="left:3738px;top:360px;width:14px;height:956px;background:#3a3b3e;border-radius:7px;"></div>
<div class="b" style="left:3730px;top:998px;width:28px;height:4px;background:#4a6b54;"></div>
<div class="b" style="left:3730px;top:1106px;width:28px;height:4px;background:#4a6b54;"></div>
<svg class="b" style="left:3718px;top:178px;" width="28" height="24" viewBox="0 0 28 24" fill="none"><path d="M3.5 12.5L10.5 19.5L23.5 5.5" stroke="#4b8e58" stroke-width="3.6" stroke-linecap="butt" stroke-linejoin="round" /></svg>
<div class="b" style="left:82px;top:1406px;width:3676px;height:694px;background:#27282b;"></div>
<div class="b" style="left:82px;top:1486px;width:3676px;height:2px;background:#1b1c1e;"></div>
<div class="b" style="left:82px;top:1556px;width:3676px;height:2px;background:#1b1c1e;"></div>
<div class="b" style="left:816px;top:1558px;width:2px;height:542px;background:#1b1c1e;"></div>
<div class="b" style="left:818px;top:1626px;width:2864px;height:474px;background:#1b1c1e;"></div>
<div class="b" style="left:3758px;top:82px;width:2px;height:2018px;background:#1b1c1e;"></div>
<span class="t" style="top:1427.0px;font-size:27px;line-height:40px;color:#dfe1e5;letter-spacing:-1.667px;left:106.5px;font-weight:bold;">Run</span>
<svg class="b" style="left:211px;top:1431px;" width="32" height="33" viewBox="0 0 32 33" fill="none"><g transform="translate(0.8 0.8) scale(0.256)"><path fill-rule="evenodd" fill="#32587f" d="M55 0C30 0 28.7 7 28.7 15V25.25H55.5V28.66H18.6C8 28.66 0 36 0 56C0 76 7 83.1 16 83.1H25.4V70.8C25.4 62 33 54.2 42.1 54.2H68.9C76.3 54.2 82.3 48 82.3 40.6V15C82.3 5 72 0 55 0ZM40.4 8.2a5.1 5.1 0 1 1 0 10.2a5.1 5.1 0 1 1 0-10.2Z"/><path fill-rule="evenodd" fill="#8c783c" d="M85.6 28.66V40.6C85.6 49.8 77.8 57.6 68.9 57.6H42.1C34.8 57.6 28.7 63.8 28.7 71.2V96.7C28.7 107 40 112.4 55.5 112.4C72 112.4 82.3 106 82.3 96.7V86.5H55.5V83.1H95.7C105 83.1 111.2 74 111.2 56C111.2 38 105 28.66 95.7 28.66ZM70.6 93.3a5.1 5.1 0 1 1 0 10.2a5.1 5.1 0 1 1 0-10.2Z"/></g><path d="M13.6 24.6L21 18.4H22.7L29.9 24.6L22.7 31.3H21Z" fill="#27282b" stroke="#27282b" stroke-width="2.6" stroke-linejoin="round"/><path d="M13.8 24.6L21 18.8V30.9Z" fill="#a05050"/><path d="M29.7 24.6L22.7 18.8V30.9Z" fill="#37694a"/></svg>
<span class="t" style="top:1427.0px;font-size:27px;line-height:40px;color:#dfe1e5;letter-spacing:0.562px;left:251.0px;">pytest in tests</span>
<svg class="b" style="left:449.5px;top:1439.5px;" width="17" height="17" viewBox="-2 -2 17 17" fill="none"><path d="M0 0L13 13M13 0L0 13" stroke="#72757b" stroke-width="2" stroke-linecap="round"/></svg>
<div class="b" style="left:186px;top:1481px;width:302px;height:7px;background:#0c6ce8;border-radius:3.5px;"></div>
<svg class="b" style="left:3660px;top:1432px;" width="8" height="28" viewBox="-4 -14 8 28" fill="none"><circle cx="0" cy="-10" r="2.3" fill="#ced0d6"/><circle cx="0" cy="0" r="2.3" fill="#ced0d6"/><circle cx="0" cy="10" r="2.3" fill="#ced0d6"/></svg>
<div class="b" style="left:3703.5px;top:1445px;width:25.5px;height:2.2px;background:#ced0d6;"></div>
<svg class="b" style="left:85.5px;top:1500px;" width="44" height="44" viewBox="0 0 44 44" fill="none"><path d="M30.4 17.3A10.8 10.8 0 1 0 20.4 32.7M31.9 8.2V17.2H22.9" stroke="#ced0d6" stroke-width="2.4" stroke-linecap="round" stroke-linejoin="round" /><path d="M23.4 23.9V36.2L35 30Z" stroke="#57a566" stroke-width="2.2" stroke-linecap="round" stroke-linejoin="round" fill="#1a2b1e"/></svg>
<svg class="b" style="left:140px;top:1500px;" width="44" height="44" viewBox="0 0 44 44" fill="none"><path d="M30.4 17.3A10.8 10.8 0 1 0 20.4 32.7M31.9 8.2V17.2H22.9" stroke="#ced0d6" stroke-width="2.4" stroke-linecap="round" stroke-linejoin="round" /><circle cx="29.2" cy="29.1" r="8" fill="#27282b"/><circle cx="29.2" cy="29.1" r="7" fill="#e0465a"/><path d="M29.2 25V30.4" stroke="#fff" stroke-width="2.2" stroke-linecap="round"/><circle cx="29.2" cy="33.3" r="1.2" fill="#fff"/></svg>
<div class="b" style="left:190px;top:1500px;width:44px;height:44px;background:#44474e;border-radius:8px;"></div>
<svg class="b" style="left:190px;top:1500px;" width="44" height="44" viewBox="0 0 44 44" fill="none"><path d="M18.9 10.5A12.3 12.3 0 0 0 15.6 33.3M8.2 33.3H15.6V26.3M31.9 11H24.5V17.5M24.5 11A11.5 11.5 0 0 1 31.5 22" stroke="#ced0d6" stroke-width="2.4" stroke-linecap="round" stroke-linejoin="round" /><path d="M23.3 23.6V36L35 29.8Z" stroke="#57a566" stroke-width="2.2" stroke-linecap="round" stroke-linejoin="round" fill="#1a2b1e"/></svg>
<div class="b" style="left:252px;top:1510px;width:24px;height:24px;background:#4e4f52;border-radius:4.5px;"></div>
<div class="b" style="left:296px;top:1502px;width:2px;height:40px;background:#3b3d41;"></div>
<div class="b" style="left:308px;top:1500px;width:44px;height:44px;background:#44474e;border-radius:8px;"></div>
<svg class="b" style="left:308px;top:1500px;" width="44" height="44" viewBox="0 0 44 44" fill="none"><path d="M9.9 22.1L17.8 30.1L34.1 13.8" stroke="#ced0d6" stroke-width="2.6" stroke-linecap="butt" stroke-linejoin="round" /></svg>
<div class="b" style="left:360px;top:1500px;width:44px;height:44px;background:#44474e;border-radius:8px;"></div>
<svg class="b" style="left:360px;top:1500px;" width="44" height="44" viewBox="0 0 44 44" fill="none"><path d="M22 9.2a12.8 12.8 0 1 1 0 25.6a12.8 12.8 0 1 1 0-25.6ZM13.3 30.5L30.6 13.3" stroke="#ced0d6" stroke-width="2.4" stroke-linecap="round" stroke-linejoin="round" /></svg>
<div class="b" style="left:414px;top:1502px;width:2px;height:40px;background:#3b3d41;"></div>
<svg class="b" style="left:427.5px;top:1500px;" width="44" height="44" viewBox="0 0 44 44" fill="none"><path d="M13.5 12.4V31M6.9 24.7L13.5 31.3L20.2 24.7M19.3 12.8H34.2M23 22.1H34.2M26.8 31H34.2" stroke="#ced0d6" stroke-width="2.4" stroke-linecap="butt" stroke-linejoin="round" /><path d="M38.4 32.4V39.8H30.9Z" fill="#ced0d6"/></svg>
<svg class="b" style="left:478px;top:1500px;" width="44" height="44" viewBox="0 0 44 44" fill="none"><path d="M11.2 14.7V30Q11.2 33 14.2 33H29.8M33.6 10.7L21 22.8M21 14.2V22.8H29.8" stroke="#ced0d6" stroke-width="2.4" stroke-linecap="butt" stroke-linejoin="round" /></svg>
<svg class="b" style="left:530px;top:1500px;" width="44" height="44" viewBox="0 0 44 44" fill="none"><path d="M22.1 9.2a12.8 12.8 0 1 1 0 25.6a12.8 12.8 0 1 1 0-25.6ZM21.8 16.1V22.1L27.7 25.4" stroke="#ced0d6" stroke-width="2.4" stroke-linecap="round" stroke-linejoin="round" /><path d="M40.1 32.4V39.8H32.3Z" fill="#ced0d6"/></svg>
<div class="b" style="left:584px;top:1502px;width:2px;height:40px;background:#3b3d41;"></div>
<svg class="b" style="left:614px;top:1508px;" width="8" height="28" viewBox="-4 -14 8 28" fill="none"><circle cx="0" cy="-10" r="2.3" fill="#ced0d6"/><circle cx="0" cy="0" r="2.3" fill="#ced0d6"/><circle cx="0" cy="10" r="2.3" fill="#ced0d6"/></svg>
<svg class="b" style="left:112.0px;top:1584.0px;" width="20" height="12.0" viewBox="-2 -2 20 12.0" fill="none"><path d="M0 0L8.0 8.0L16 0" stroke="#9699a0" stroke-width="2" stroke-linecap="round" stroke-linejoin="round"/></svg>
<svg class="b" style="left:149.0px;top:1575.5px;" width="30" height="30" viewBox="0 0 30 30" fill="none"><circle cx="15" cy="15" r="14" fill="#f2bb58"/><path d="M9.4 9.4L20.6 20.6M20.6 9.4L9.4 20.6" stroke="#27282b" stroke-width="3.2" stroke-linecap="round"/></svg>
<span class="t" style="top:1571.5px;font-size:27px;line-height:40px;color:#dfe1e5;letter-spacing:0.288px;left:187.0px;">Test Results</span>
<span class="t" style="top:1571.5px;font-size:24.5px;line-height:40px;color:#676a71;letter-spacing:-0.523px;left:733.0px;">0 ms</span>
<svg class="b" style="left:149.7px;top:1632.0px;" width="20" height="12.0" viewBox="-2 -2 20 12.0" fill="none"><path d="M0 0L8.0 8.0L16 0" stroke="#9699a0" stroke-width="2" stroke-linecap="round" stroke-linejoin="round"/></svg>
<svg class="b" style="left:186.7px;top:1623.5px;" width="30" height="30" viewBox="0 0 30 30" fill="none"><circle cx="15" cy="15" r="14" fill="#f2bb58"/><path d="M9.4 9.4L20.6 20.6M20.6 9.4L9.4 20.6" stroke="#27282b" stroke-width="3.2" stroke-linecap="round"/></svg>
<span class="t" style="top:1619.5px;font-size:27px;line-height:40px;color:#dfe1e5;letter-spacing:0.697px;left:224.7px;">tests</span>
<span class="t" style="top:1619.5px;font-size:24.5px;line-height:40px;color:#676a71;letter-spacing:-0.523px;left:733.0px;">0 ms</span>
<svg class="b" style="left:190.9px;top:1676.0px;" width="12.0" height="20" viewBox="-2 -2 12.0 20" fill="none"><path d="M0 0L8.0 8.0L0 16" stroke="#9699a0" stroke-width="2" stroke-linecap="round" stroke-linejoin="round"/></svg>
<svg class="b" style="left:225.4px;top:1674.0px;" width="28" height="24" viewBox="0 0 28 24" fill="none"><path d="M3.6 11.9L10 18.2L23.8 4.9" stroke="#4b8e58" stroke-width="3.7" stroke-linecap="butt" stroke-linejoin="round" /></svg>
<span class="t" style="top:1667.5px;font-size:27px;line-height:40px;color:#dfe1e5;letter-spacing:0.184px;left:262.4px;">test_guardian</span>
<span class="t" style="top:1667.5px;font-size:24.5px;line-height:40px;color:#676a71;letter-spacing:-0.523px;left:733.0px;">0 ms</span>
<svg class="b" style="left:187.4px;top:1728.0px;" width="20" height="12.0" viewBox="-2 -2 20 12.0" fill="none"><path d="M0 0L8.0 8.0L16 0" stroke="#9699a0" stroke-width="2" stroke-linecap="round" stroke-linejoin="round"/></svg>
<svg class="b" style="left:224.4px;top:1719.5px;" width="30" height="30" viewBox="0 0 30 30" fill="none"><circle cx="15" cy="15" r="14" fill="#f2bb58"/><path d="M9.4 9.4L20.6 20.6M20.6 9.4L9.4 20.6" stroke="#27282b" stroke-width="3.2" stroke-linecap="round"/></svg>
<span class="t" style="top:1715.5px;font-size:27px;line-height:40px;color:#dfe1e5;letter-spacing:0.312px;left:262.4px;">test_player</span>
<span class="t" style="top:1715.5px;font-size:24.5px;line-height:40px;color:#676a71;letter-spacing:-0.523px;left:733.0px;">0 ms</span>
<svg class="b" style="left:263.1px;top:1770.0px;" width="28" height="24" viewBox="0 0 28 24" fill="none"><path d="M3.6 11.9L10 18.2L23.8 4.9" stroke="#4b8e58" stroke-width="3.7" stroke-linecap="butt" stroke-linejoin="round" /></svg>
<span class="t" style="top:1763.5px;font-size:27px;line-height:40px;color:#dfe1e5;letter-spacing:0.494px;left:300.1px;">test_construction</span>
<span class="t" style="top:1763.5px;font-size:24.5px;line-height:40px;color:#676a71;letter-spacing:-0.523px;left:733.0px;">0 ms</span>
<svg class="b" style="left:263.1px;top:1818.0px;" width="28" height="24" viewBox="0 0 28 24" fill="none"><path d="M3.6 11.9L10 18.2L23.8 4.9" stroke="#4b8e58" stroke-width="3.7" stroke-linecap="butt" stroke-linejoin="round" /></svg>
<span class="t" style="top:1811.5px;font-size:27px;line-height:40px;color:#dfe1e5;letter-spacing:0.049px;left:300.1px;">test_add_guardian</span>
<span class="t" style="top:1811.5px;font-size:24.5px;line-height:40px;color:#676a71;letter-spacing:-0.523px;left:733.0px;">0 ms</span>
<svg class="b" style="left:263.1px;top:1866.0px;" width="28" height="24" viewBox="0 0 28 24" fill="none"><path d="M3.6 11.9L10 18.2L23.8 4.9" stroke="#4b8e58" stroke-width="3.7" stroke-linecap="butt" stroke-linejoin="round" /></svg>
<span class="t" style="top:1859.5px;font-size:27px;line-height:40px;color:#dfe1e5;letter-spacing:0.074px;left:300.1px;">test_add_guardians</span>
<span class="t" style="top:1859.5px;font-size:24.5px;line-height:40px;color:#676a71;letter-spacing:-0.523px;left:733.0px;">0 ms</span>
<div class="b" style="left:106px;top:1902px;width:686px;height:48px;background:#263d66;border-radius:8px;"></div>
<svg class="b" style="left:262.1px;top:1911.5px;" width="30" height="30" viewBox="0 0 30 30" fill="none"><circle cx="15" cy="15" r="14" fill="#f2bb58"/><path d="M9.4 9.4L20.6 20.6M20.6 9.4L9.4 20.6" stroke="#27282b" stroke-width="3.2" stroke-linecap="round"/></svg>
<span class="t" style="top:1907.5px;font-size:27px;line-height:40px;color:#dfe1e5;letter-spacing:0.090px;left:300.1px;">test_primary_guardian</span>
<span class="t" style="top:1907.5px;font-size:24.5px;line-height:40px;color:#dfe1e5;letter-spacing:-0.523px;left:733.0px;">0 ms</span>
<svg class="b" style="left:823px;top:1569px;" width="30" height="30" viewBox="0 0 30 30" fill="none"><circle cx="15" cy="15" r="14" fill="#f2bb58"/><path d="M9.4 9.4L20.6 20.6M20.6 9.4L9.4 20.6" stroke="#27282b" stroke-width="3.2" stroke-linecap="round"/></svg>
<span class="t" style="top:1564.5px;font-size:27px;line-height:40px;color:#d8465a;letter-spacing:0.161px;left:861.0px;">Tests failed: 1</span>
<span class="t" style="top:1564.5px;font-size:27px;line-height:40px;color:#dfe1e5;letter-spacing:0.175px;left:1028.5px;">, passed: 4</span>
<span class="t" style="top:1564.5px;font-size:27px;line-height:40px;color:#676a71;letter-spacing:0.247px;left:1162.5px;"> of 5 tests – 0 ms</span>
<div class="c" style="left:842px;top:1630px;">FAILED                             [100%]</div>
<div class="c" style="left:842px;top:1674px;"><span class="lk">tests/test_player.py:21</span><span class="er"> (test_primary_guardian)</span></div>
<div class="c" style="left:842px;top:1718px;"><span class="er">player_one = Player(first_name='Felicity', last_name='Smith', jersey=16, guardians=[])</span></div>
<div class="c" style="left:842px;top:1762px;"><span class="er">all_guardians = [Guardian(first_name='Jennifer', last_name='Smith'), Guardian(first_name='Mark', last_name='Smith'), Guardian(first_name='Julia', last_name='Smith')]</span></div>
<div class="c" style="left:842px;top:1850px;"><span class="er">    def test_primary_guardian(player_one, all_guardians):</span></div>
<div class="c" style="left:842px;top:1894px;"><span class="er">&gt;       assert player_one.primary_guardian</span></div>
<div class="c" style="left:842px;top:1982px;"><span class="lk">test_player.py:23</span><span class="er">:</span></div>
<div class="c" style="left:842px;top:2026px;"><span class="er">_ _ _ _ _ _ _ _ _ _ _ _ _ _ _ _ _ _ _ _ _ _ _ _ _ _ _ _ _ _ _ _ _ _ _ _ _ _ _ _</span></div>
<svg class="b" style="left:3698px;top:1640px;" width="44" height="44" viewBox="0 0 44 44" fill="none"><path d="M22 11.5V33M13.8 19.8L22 11.5L30.2 19.8" stroke="#505257" stroke-width="2.2" stroke-linecap="round" stroke-linejoin="round" /></svg>
<svg class="b" style="left:3698px;top:1692px;" width="44" height="44" viewBox="0 0 44 44" fill="none"><path d="M22 11V32.5M13.8 24.2L22 32.5L30.2 24.2" stroke="#505257" stroke-width="2.2" stroke-linecap="round" stroke-linejoin="round" /></svg>
<svg class="b" style="left:3698px;top:1746px;" width="44" height="44" viewBox="0 0 44 44" fill="none"><path d="M8 11H36M8 20H31.5A4.4 4.4 0 0 1 31.5 28.8H24M27 24.6L23 28.8L27 33M8 28.8H17.4" stroke="#ced0d6" stroke-width="2.2" stroke-linecap="butt" stroke-linejoin="round" /></svg>
<div class="b" style="left:3698px;top:1796px;width:44px;height:44px;background:#44474e;border-radius:8px;"></div>
<svg class="b" style="left:3698px;top:1796px;" width="44" height="44" viewBox="0 0 44 44" fill="none"><path d="M8 12H17.4M8 21.8H17.4M8 30.7H36M29.5 8.6V25.5M23 19.3L29.5 25.8L36 19.3" stroke="#ced0d6" stroke-width="2.2" stroke-linecap="butt" stroke-linejoin="round" /></svg>
<svg class="b" style="left:3698px;top:1848px;" width="44" height="44" viewBox="0 0 44 44" fill="none"><path d="M15 17.5V11.8H29V17.5M15 29H10.6Q9.1 29 9.1 27.5V19.5Q9.1 18 10.6 18H33.4Q34.9 18 34.9 19.5V27.5Q34.9 29 33.4 29H29M15 25H29V33H15Z" stroke="#ced0d6" stroke-width="2.2" stroke-linecap="round" stroke-linejoin="round" /><circle cx="31.3" cy="21.8" r="1.3" fill="#ced0d6"/></svg>
<svg class="b" style="left:3698px;top:1900px;" width="44" height="44" viewBox="0 0 44 44" fill="none"><path d="M11 15.8H33M16.6 15.6V13Q16.6 9.4 20 9.4H24Q27.4 9.4 27.4 13V15.6M13.4 16V32Q13.4 35 16.4 35H27.6Q30.6 35 30.6 32V16M19.3 21.5V30M24.7 21.5V30" stroke="#ced0d6" stroke-width="2.2" stroke-linecap="round" stroke-linejoin="round" /></svg>
<svg class="b" style="left:3730px;top:1476px;" width="34" height="46" viewBox="0 0 34 46" fill="none"><path d="M5.9 5V36.9L12.6 31.1L17.1 41L24.2 37.5L19.8 28L28.9 27.1Z" fill="#fff"/><path d="M8 9.9V32.3L13.2 27.5L18.2 37.9L21.9 36.2L17.3 26.3L23.5 25.7Z" fill="#000"/></svg>
<svg class="b" style="left:26px;top:2120px;" width="20" height="20" viewBox="0 0 20 20" fill="none"><rect x="3" y="3" width="14" height="14" rx="3.5" fill="#1c2a44" stroke="#3b82f6" stroke-width="2.4"/></svg>
<span class="t" style="top:2109.5px;font-size:27px;line-height:40px;color:#a0a3ab;letter-spacing:-0.066px;left:53.0px;">laxleague</span>
<svg class="b" style="left:187.75px;top:2119.0px;" width="11.5" height="19" viewBox="-2 -2 11.5 19" fill="none"><path d="M0 0L7.5 7.5L0 15" stroke="#a0a3ab" stroke-width="2" stroke-linecap="round" stroke-linejoin="round"/></svg>
<span class="t" style="top:2109.5px;font-size:27px;line-height:40px;color:#a0a3ab;letter-spacing:0.597px;left:218.5px;">tests</span>
<svg class="b" style="left:297.75px;top:2119.0px;" width="11.5" height="19" viewBox="-2 -2 11.5 19" fill="none"><path d="M0 0L7.5 7.5L0 15" stroke="#a0a3ab" stroke-width="2" stroke-linecap="round" stroke-linejoin="round"/></svg>
<svg class="b" style="left:330px;top:2114px;" width="28.5" height="28.5" viewBox="-1 0 114 113" fill="none"><path fill-rule="evenodd" fill="#3876b4" d="M55 0C30 0 28.7 7 28.7 15V25.25H55.5V28.66H18.6C8 28.66 0 36 0 56C0 76 7 83.1 16 83.1H25.4V70.8C25.4 62 33 54.2 42.1 54.2H68.9C76.3 54.2 82.3 48 82.3 40.6V15C82.3 5 72 0 55 0ZM40.4 8.2a5.1 5.1 0 1 1 0 10.2a5.1 5.1 0 1 1 0-10.2Z"/><path fill-rule="evenodd" fill="#f5c53e" d="M85.6 28.66V40.6C85.6 49.8 77.8 57.6 68.9 57.6H42.1C34.8 57.6 28.7 63.8 28.7 71.2V96.7C28.7 107 40 112.4 55.5 112.4C72 112.4 82.3 106 82.3 96.7V86.5H55.5V83.1H95.7C105 83.1 111.2 74 111.2 56C111.2 38 105 28.66 95.7 28.66ZM70.6 93.3a5.1 5.1 0 1 1 0 10.2a5.1 5.1 0 1 1 0-10.2Z"/></svg>
<span class="t" style="top:2109.5px;font-size:27px;line-height:40px;color:#a0a3ab;letter-spacing:0.458px;left:369.0px;">test_player.py</span>
<span class="t" style="top:2109.5px;font-size:27px;line-height:40px;color:#a0a3ab;letter-spacing:0.887px;left:2924.0px;">23:39</span>
<svg class="b" style="left:3024px;top:2110px;" width="40" height="40" viewBox="0 0 40 40" fill="none"><path d="M29.63 29.49C29.17 29.74 28.18 30.60 26.90 30.98C25.62 31.35 23.59 31.77 21.93 31.73C20.28 31.69 18.42 31.31 16.97 30.73C15.52 30.16 14.39 29.27 13.25 28.25C12.11 27.22 10.85 25.81 10.10 24.60C9.36 23.39 8.90 22.12 8.78 21.00C8.65 19.88 8.88 18.78 9.35 17.85C9.82 16.93 10.75 16.04 11.60 15.45C12.46 14.87 13.50 14.57 14.48 14.34C15.46 14.12 16.43 14.08 17.46 14.10C18.50 14.12 19.74 14.21 20.69 14.46C21.64 14.71 22.52 15.08 23.18 15.60C23.84 16.12 24.39 16.91 24.66 17.57C24.93 18.23 24.93 18.94 24.80 19.56C24.67 20.18 24.30 20.89 23.90 21.30C23.50 21.71 22.93 21.97 22.40 22.05C21.86 22.13 20.98 21.84 20.69 21.80M10.37 10.71C10.83 10.46 11.82 9.60 13.10 9.23C14.38 8.85 16.41 8.44 18.07 8.48C19.72 8.52 21.58 8.89 23.03 9.47C24.48 10.05 25.61 10.93 26.75 11.96C27.89 12.98 29.15 14.39 29.90 15.60C30.64 16.81 31.09 18.08 31.22 19.20C31.34 20.33 31.12 21.43 30.65 22.35C30.18 23.28 29.25 24.16 28.40 24.75C27.54 25.34 26.50 25.63 25.52 25.86C24.54 26.09 23.57 26.12 22.54 26.10C21.50 26.08 20.26 25.99 19.31 25.74C18.36 25.49 17.48 25.12 16.82 24.60C16.16 24.08 15.61 23.30 15.34 22.64C15.07 21.98 15.07 21.26 15.20 20.64C15.33 20.02 15.70 19.32 16.10 18.90C16.50 18.49 17.07 18.23 17.60 18.15C18.14 18.07 19.02 18.36 19.31 18.41" stroke="#c4c6cc" stroke-width="2.0" stroke-linecap="round" stroke-linejoin="round" /></svg>
<span class="t" style="top:2109.5px;font-size:27px;line-height:40px;color:#a0a3ab;letter-spacing:-0.758px;left:3091.5px;">LF</span>
<span class="t" style="top:2109.5px;font-size:27px;line-height:40px;color:#a0a3ab;letter-spacing:0.200px;left:3155.0px;">UTF-8</span>
<span class="t" style="top:2109.5px;font-size:27px;line-height:40px;color:#a0a3ab;letter-spacing:0.242px;left:3266.5px;">4 spaces</span>
<span class="t" style="top:2109.5px;font-size:27px;line-height:40px;color:#a0a3ab;letter-spacing:0.105px;left:3410.5px;">Python 3.12 (laxleague) (2)</span>
<svg class="b" style="left:3775px;top:2114px;" width="32" height="32" viewBox="0 0 32 32" fill="none"><rect x="4.1" y="13.1" width="17.8" height="14.1" rx="3.2" stroke="#c4c6cc" stroke-width="2.2"/><path d="M18.7 13V9.4A4.1 4.1 0 0 1 26.9 9.4V12.8M13 17.4V21.7" stroke="#c4c6cc" stroke-width="2.2" stroke-linecap="butt" stroke-linejoin="round" /></svg>
</div></body></html>
